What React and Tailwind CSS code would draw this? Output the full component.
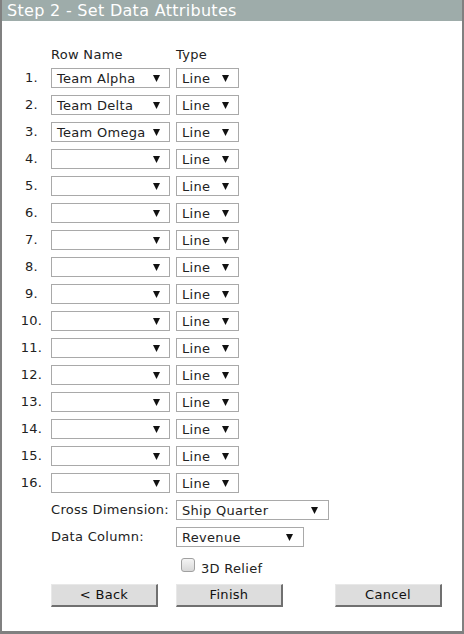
import React from "react";

const font = { fontFamily: '"DejaVu Sans", Verdana, sans-serif' };

function Arrow() {
  return (
    <svg width="7" height="7" viewBox="0 0 7 7" className="shrink-0">
      <polygon points="0,0 7,0 3.5,7" fill="#111" />
    </svg>
  );
}

function Select({ value, w, pr = "pr-[9px]" }) {
  return (
    <div
      className={`flex items-center justify-between h-[20px] border border-[#a9a9a9] bg-white pl-[5px] ${pr} text-[13px] tracking-[0.3px] text-[#222] leading-none`}
      style={{ width: w }}
    >
      <span className="whitespace-nowrap">{value}</span>
      <Arrow />
    </div>
  );
}

function Button({ children }) {
  return (
    <div className="w-[107px] h-[23px] flex items-center justify-center bg-[#dddddd] border-t border-l border-t-[#e8e8e8] border-l-[#e8e8e8] border-r-2 border-b-2 border-r-[#707070] border-b-[#707070] text-[13px] tracking-[0.3px] text-[#111]">
      {children}
    </div>
  );
}

export default function App() {
  const names = ["Team Alpha", "Team Delta", "Team Omega"];
  const rows = Array.from({ length: 16 }, (_, i) => names[i] || "");
  return (
    <div
      className="w-[464px] h-[634px] bg-white border-l-2 border-r-2 border-b-[3px] border-[#808080] flex flex-col"
      style={font}
    >
      <div className="h-[21px] bg-[#9eacaa] text-white text-[16px] tracking-[0.3px] leading-[21px] pl-[5px] whitespace-nowrap">
        Step 2 - Set Data Attributes
      </div>
      <div className="flex flex-col pt-[24px]">
        <div className="flex items-center h-[20px] text-[13px] tracking-[0.3px] text-[#222] pl-[49px]">
          <span className="w-[125px]">Row Name</span>
          <span>Type</span>
        </div>
        <div className="flex flex-col gap-[7px] mt-[3px]">
          {rows.map((n, i) => (
            <div key={i} className="flex items-center h-[20px] pl-[10px]">
              <span className="w-[39px] text-center text-[13px] tracking-[0.3px] text-[#222]">{i + 1}.</span>
              <Select value={n} w="119px" />
              <div className="w-[6px]" />
              <Select value="Line" w="63px" />
            </div>
          ))}
          <div className="flex items-center h-[20px] pl-[49px] text-[13px] tracking-[0.3px] text-[#222]">
            <span className="w-[125px]">Cross Dimension:</span>
            <Select value="Ship Quarter" w="153px" pr="pr-[10px]" />
          </div>
          <div className="flex items-center h-[20px] pl-[49px] text-[13px] tracking-[0.3px] text-[#222]">
            <span className="w-[125px]">Data Column:</span>
            <Select value="Revenue" w="128px" pr="pr-[10px]" />
          </div>
        </div>
        <div className="flex items-center h-[20px] mt-[10px] pl-[179px] text-[13px] tracking-[0.3px] text-[#222]">
          <div className="w-[14px] h-[14px] rounded-[3px] border border-[#a0a0a0] bg-gradient-to-b from-[#f4f4f4] to-[#d8d8d8] -mt-[4px]" />
          <span className="ml-[6px] mt-[4px]">3D Relief</span>
        </div>
        <div className="flex items-center pl-[49px] mt-[7px]">
          <Button>&lt; Back</Button>
          <div className="w-[18px]" />
          <Button>Finish</Button>
          <div className="w-[52px]" />
          <Button>Cancel</Button>
        </div>
      </div>
    </div>
  );
}
